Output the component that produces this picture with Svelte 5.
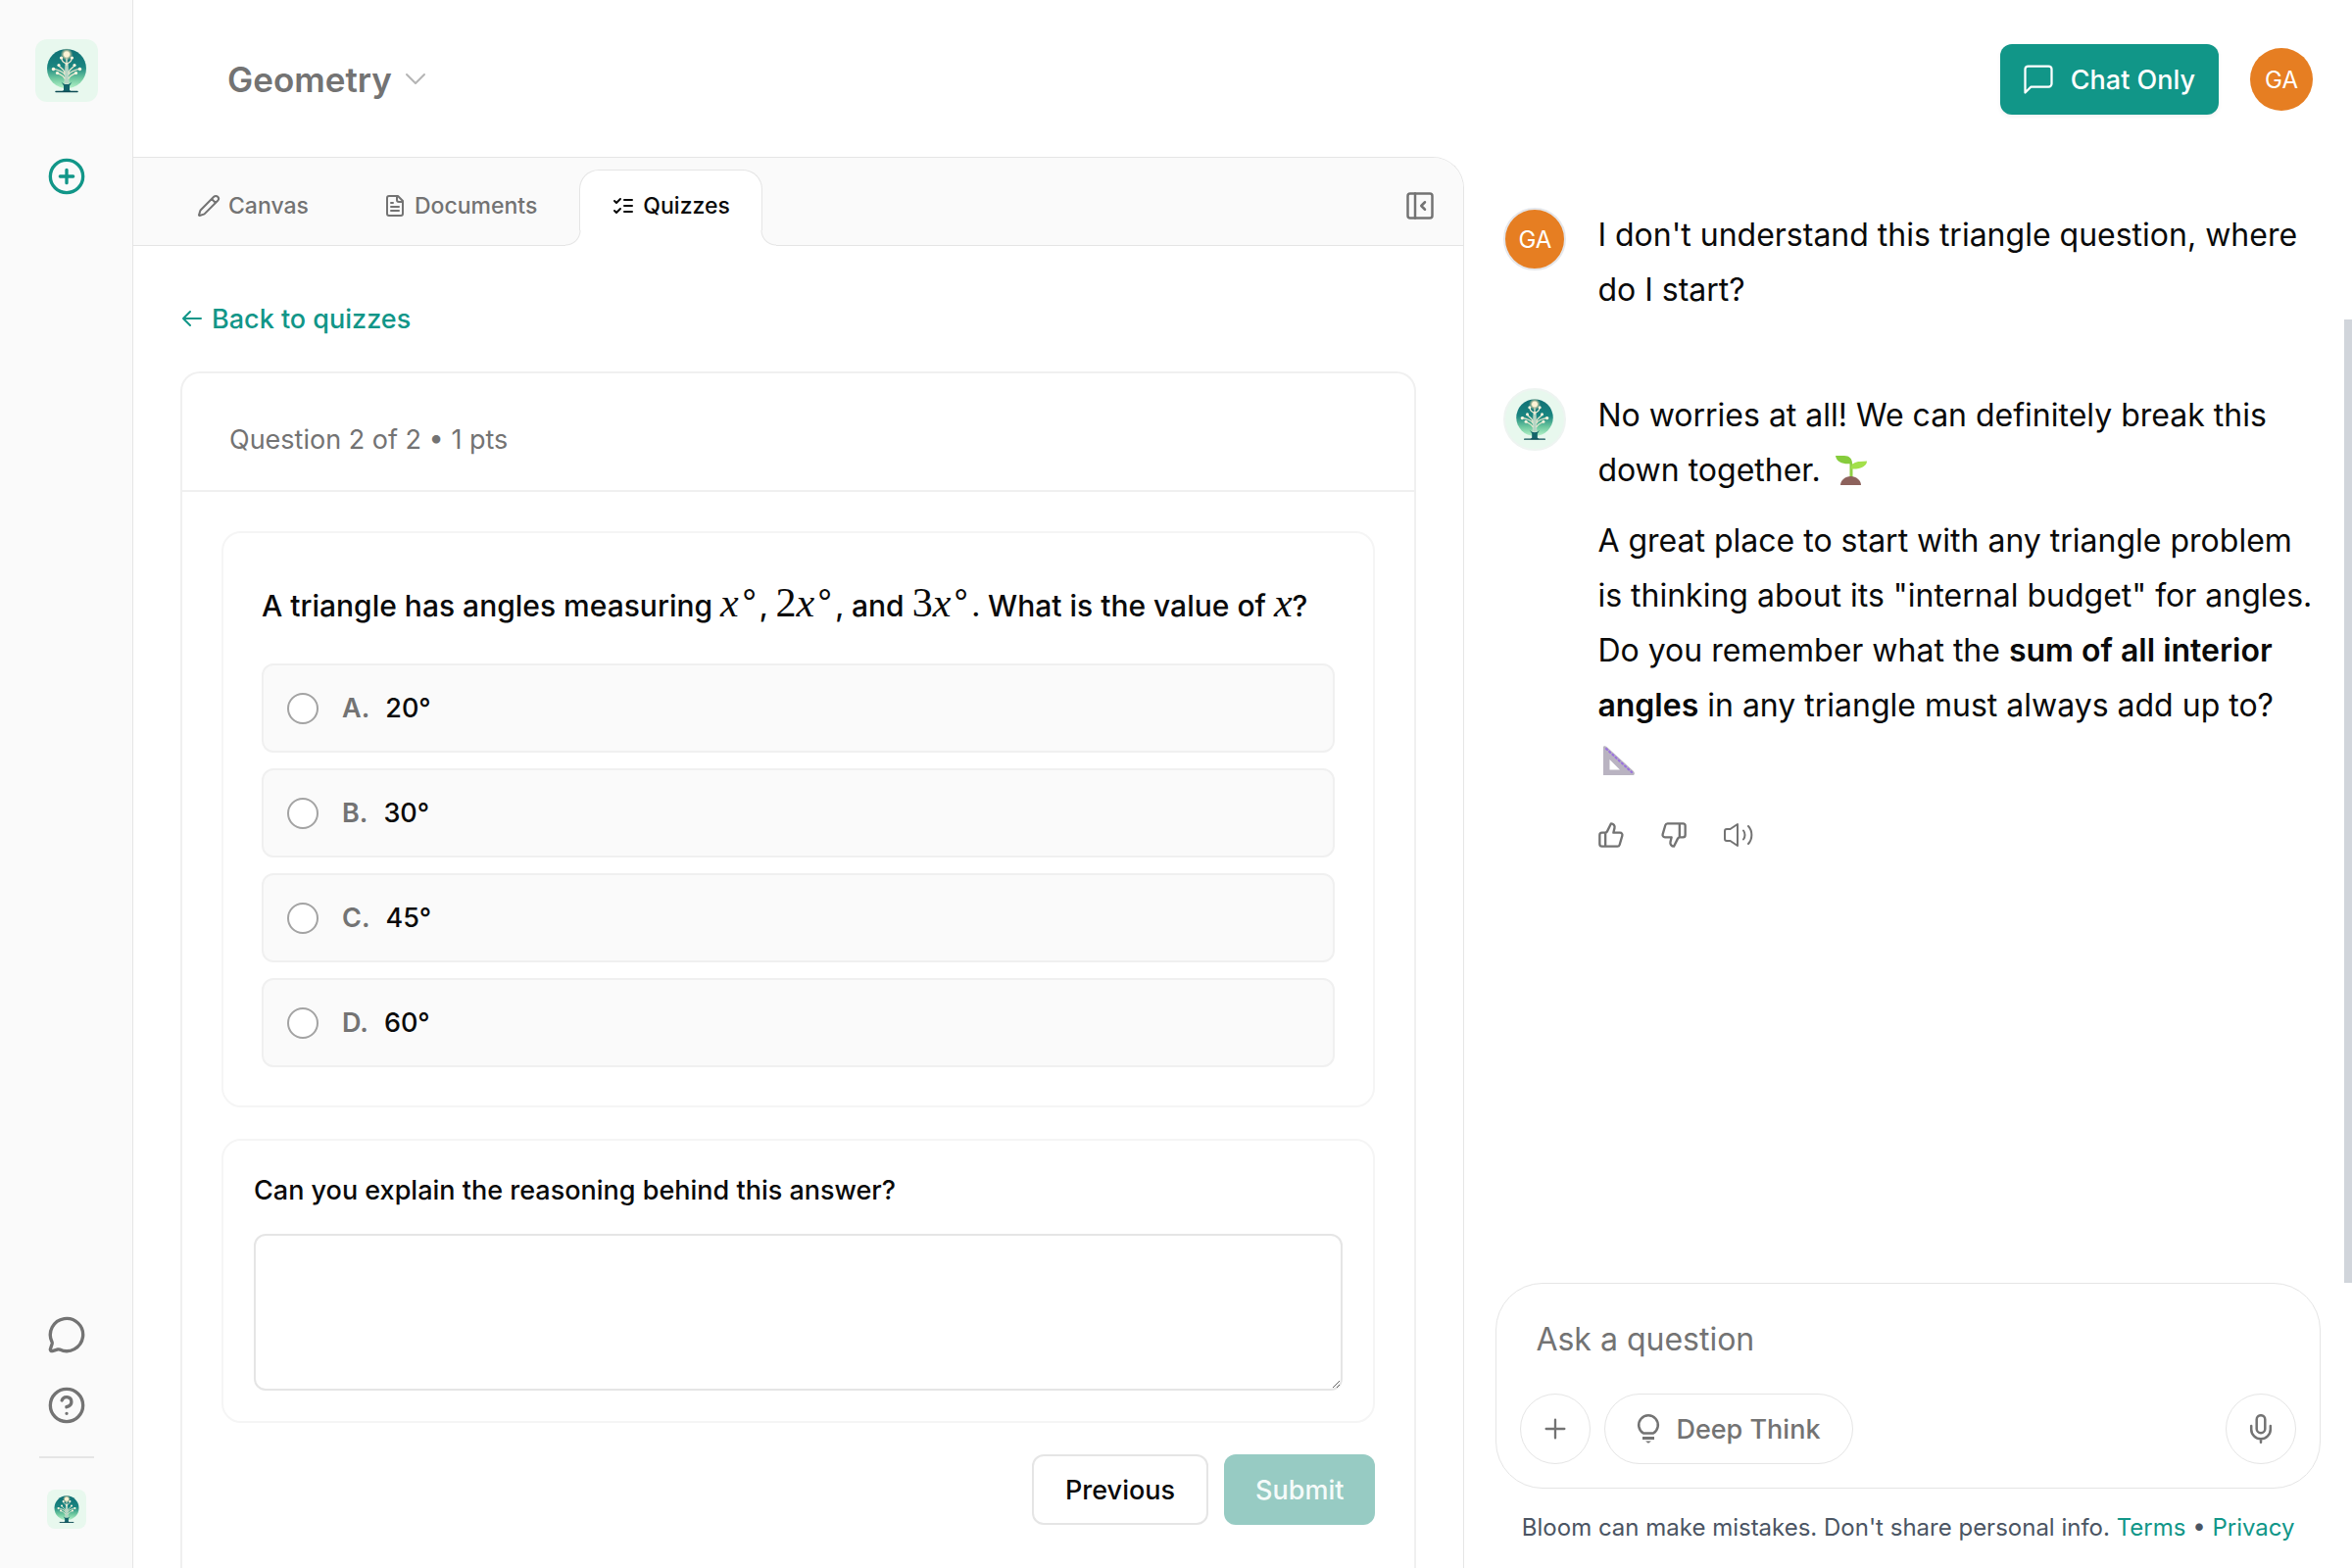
<script>
  let choice = $state("");
  let explanation = $state("");
  let message = $state("");

  const options = [
    { letter: "A", label: "20°" },
    { letter: "B", label: "30°" },
    { letter: "C", label: "45°" },
    { letter: "D", label: "60°" },
  ];
</script>

{#snippet logo()}
  <svg viewBox="0 0 64 64" aria-hidden="true">
    <defs>
      <linearGradient id="globe" x1="0" y1="0" x2="0" y2="1">
        <stop offset="0" stop-color="#0f6f74" />
        <stop offset="0.45" stop-color="#1a8580" />
        <stop offset="0.75" stop-color="#6cc79e" />
        <stop offset="1" stop-color="#b4f2c8" />
      </linearGradient>
      <radialGradient id="glow">
        <stop offset="0.4" stop-color="#fff3d6" />
        <stop offset="0.6" stop-color="#d8cfa4" stop-opacity="0.7" />
        <stop offset="1" stop-color="#8fae8c" stop-opacity="0" />
      </radialGradient>
    </defs>
    <circle cx="32" cy="30" r="20" fill="url(#globe)" />
    <circle cx="32" cy="15.5" r="6.5" fill="url(#glow)" />
    <path d="M29.500 46l1-22h3l1 22z" fill="#d5e8d6" />
    <path d="M31 45V27M33 45V27" stroke="#6fa99c" stroke-width="0.6" />
    <g fill="none" stroke="#efe9d2" stroke-width="1.3" stroke-linecap="round">
      <path d="M32 26v-6M32 25c-3-1-5-2-5-5M32 25c3-1 5-2 5-5M27 20v-1M37 20v-1" />
      <path d="M30 34c-1-4-5-5-6-7M34 34c1-4 5-5 6-7M30 36c-2-4-7-4-11-6M34 36c2-4 7-4 11-6M30 40c-2-4-6-4-8-6M34 40c2-4 6-4 8-6" />
    </g>
    <g fill="#fff6e0">
      <circle cx="26.5" cy="19" r="1.6" /><circle cx="37.5" cy="19" r="1.6" />
      <circle cx="24" cy="26.5" r="1.6" /><circle cx="40" cy="26.5" r="1.6" />
      <circle cx="18.5" cy="30.5" r="1.7" /><circle cx="45.5" cy="30.5" r="1.7" />
      <circle cx="22.5" cy="34.5" r="1.6" /><circle cx="41.5" cy="34.5" r="1.6" />
    </g>
    <path d="M26.500 43.500c2 2 3 2.500 5.500 2.500s3.500-.5 5.500-2.500l-2.500 4v4.500l2 1.500h-10l2-1.500v-4.500z" fill="#13646a" />
    <path d="M21 53.500h22" stroke="#0d4c55" stroke-width="1.5" stroke-linecap="round" />
  </svg>
{/snippet}

<div class="app">
  <nav class="rail" aria-label="Main">
    <a class="brand" href="#home" aria-label="Home">{@render logo()}</a>
    <button class="rail-btn accent" aria-label="New chat">
      <svg class="icon-lg" viewBox="0 0 24 24"><circle cx="12" cy="12" r="10" /><path d="M8 12h8M12 8v8" /></svg>
    </button>
    <div class="rail-foot">
      <button class="rail-btn" aria-label="Feedback">
        <svg class="icon-lg" viewBox="0 0 24 24"><path d="M2.992 16.342a2 2 0 0 1 .094 1.167l-1.065 3.290a1 1 0 0 0 1.236 1.168l3.413-.998a2 2 0 0 1 1.099.092 10 10 0 1 0-4.777-4.719" /></svg>
      </button>
      <button class="rail-btn" aria-label="Help">
        <svg class="icon-lg" viewBox="0 0 24 24"><circle cx="12" cy="12" r="10" /><path d="M9.090 9a3 3 0 0 1 5.830 1c0 2-3 3-3 3M12 17h.01" /></svg>
      </button>
      <hr />
      <a class="brand small" href="#profile" aria-label="Profile">{@render logo()}</a>
    </div>
  </nav>

  <div class="page">
    <header class="topbar">
      <button class="subject">
        Geometry
        <svg class="chevron" viewBox="0 0 24 24"><path d="m3 7 9 9 9-9" /></svg>
      </button>
      <div class="top-actions">
        <button class="btn primary chat-only">
          <svg viewBox="2 2 20 20"><path d="M21 15a2 2 0 0 1-2 2H7l-4 4V5a2 2 0 0 1 2-2h14a2 2 0 0 1 2 2z" /></svg>
          Chat Only
        </button>
        <button class="avatar" aria-label="Account">GA</button>
      </div>
    </header>

    <div class="columns">
      <section class="workspace">
        <div class="tabs">
          <div class="tab-list" role="tablist">
            <button class="tab" role="tab" aria-selected="false">
              <svg class="icon-sm" viewBox="0 0 24 24"><path d="M21.174 6.812a1 1 0 0 0-3.986-3.987L3.842 16.174a2 2 0 0 0-.5.830l-1.321 4.352a.5.5 0 0 0 .623.622l4.353-1.320a2 2 0 0 0 .830-.497zM15 5l4 4" /></svg>
              Canvas
            </button>
            <button class="tab docs" role="tab" aria-selected="false">
              <svg class="icon-sm" viewBox="0 0 24 24"><path d="M15 2H6a2 2 0 0 0-2 2v16a2 2 0 0 0 2 2h12a2 2 0 0 0 2-2V7ZM14 2v4a2 2 0 0 0 2 2h4M10 9H8M16 13H8M16 17H8" /></svg>
              Documents
            </button>
            <button class="tab active" role="tab" aria-selected="true">
              <svg class="icon-sm" viewBox="0 0 24 24"><path d="m3 17 2 2 4-4M3 7l2 2 4-4M13 6h8M13 12h8M13 18h8" /></svg>
              Quizzes
            </button>
          </div>
          <button class="collapse" aria-label="Collapse panel">
            <svg viewBox="0 0 24 24"><rect x="2" y="2" width="20" height="20" rx="2" /><path d="M8 2v20M16 9l-3 3 3 3" /></svg>
          </button>
        </div>

        <div class="quiz-area">
          <a class="back" href="#quizzes">
            <svg class="icon-sm" viewBox="0 0 24 24"><path d="m10 19-7-7 7-7M21 12H3" /></svg>
            Back to quizzes
          </a>

          <div class="quiz">
            <div class="quiz-head">Question 2 of 2 • 1 pts</div>
            <div class="quiz-body">
              <fieldset class="card question">
                <legend>
                  A triangle has angles measuring <span class="math"><i>x</i><sup>∘</sup></span>, <span class="math">2<i>x</i><sup>∘</sup></span>, and <span class="math">3<i>x</i><sup>∘</sup></span>. What is the value of <span class="math"><i>x</i></span>?
                </legend>
                <div class="options">
                  {#each options as option}
                    <label class="option">
                      <input type="radio" name="answer" value={option.letter} bind:group={choice} />
                      <span class="letter">{option.letter}.</span>
                      <span>{option.label}</span>
                    </label>
                  {/each}
                </div>
              </fieldset>

              <div class="card reasoning">
                <label for="reasoning">Can you explain the reasoning behind this answer?</label>
                <textarea id="reasoning" bind:value={explanation}></textarea>
              </div>

              <div class="quiz-actions">
                <button class="btn outline">Previous</button>
                <button class="btn primary" disabled>Submit</button>
              </div>
            </div>
          </div>
        </div>
      </section>

      <section class="chat" aria-label="Chat">
        <div class="messages">
          <div class="message">
            <span class="avatar msg-avatar">GA</span>
            <div class="text">
              <p>I don't understand this triangle question, where do I start?</p>
            </div>
          </div>
          <div class="message">
            <span class="bot-avatar">{@render logo()}</span>
            <div class="text">
              <p>
                No worries at all! We can definitely break this down together.
                <svg class="emoji" viewBox="0 0 32 30" role="img" aria-label="seedling">
                  <path d="M14.500 8h3v14h-3z" fill="#8fd044" />
                  <path d="M0 0h9c5 0 8 3 8 8-9 1-16-1-17-8z" fill="#86cc3c" />
                  <path d="M16 13c0-5 4-7 9-7l7-.5c0 5-6 8.500-16 8z" fill="#a3e04a" />
                  <path d="M5 30c0-5 5-9 10.500-9S26 25 26 30z" fill="#8d625c" />
                </svg>
              </p>
              <p>
                A great place to start with any triangle problem is thinking about its "internal budget" for angles. Do you remember what the <strong>sum of all interior angles</strong> in any triangle must always add up to?
                <svg class="emoji" viewBox="0 0 32 30" role="img" aria-label="triangular ruler">
                  <path d="M0 1.500C0 0 2 0 3.500 1L31 26c1.500 2 1 4-1 4H0zM6.500 14v10.500h10.500z" fill="#b9b3c1" fill-rule="evenodd" />
                  <path d="m3 3 26 24" stroke="#9a6fe0" stroke-width="2" stroke-dasharray="1.5 2.8" />
                </svg>
              </p>
              <div class="reactions">
                <button aria-label="Good response">
                  <svg class="icon-md" viewBox="0 0 24 24"><path d="M7 10v12M15 5.880 14 10h5.830a2 2 0 0 1 1.920 2.560l-2.330 8A2 2 0 0 1 17.500 22H4a2 2 0 0 1-2-2v-8a2 2 0 0 1 2-2h2.760a2 2 0 0 0 1.790-1.110L12 2a3.130 3.130 0 0 1 3 3.880Z" /></svg>
                </button>
                <button aria-label="Bad response">
                  <svg class="icon-md" viewBox="0 0 24 24"><path d="M17 14V2M9 18.120 10 14H4.170a2 2 0 0 1-1.920-2.560l2.330-8A2 2 0 0 1 6.500 2H20a2 2 0 0 1 2 2v8a2 2 0 0 1-2 2h-2.760a2 2 0 0 0-1.790 1.110L12 22a3.130 3.130 0 0 1-3-3.880Z" /></svg>
                </button>
                <button aria-label="Read aloud">
                  <svg class="icon-speak" viewBox="0 0 32 32"><path d="M15 5v22l-7.500-5H4a2 2 0 0 1-2-2v-8a2 2 0 0 1 2-2h3.500zM21 11.500c2 2.500 2 6.500 0 9M26 7c4.500 5 4.500 13 0 18" /></svg>
                </button>
              </div>
            </div>
          </div>
          <div class="scroll-thumb"></div>
        </div>

        <div class="composer-wrap">
          <form class="composer">
            <input type="text" placeholder="Ask a question" aria-label="Ask a question" bind:value={message} />
            <div class="composer-row">
              <button type="button" class="pill round" aria-label="Add attachment">
                <svg class="icon-md" viewBox="0 0 24 24"><path d="M4 12h16M12 4v16" /></svg>
              </button>
              <button type="button" class="pill">
                <svg class="bulb" viewBox="0 0 24 30"><path d="M7 19.500a9.800 9.800 0 1 1 10 0z" /><path d="M6 23h12v3H6zM9 27.500h6l-3 2.300z" class="solid" /></svg>
                Deep Think
              </button>
              <button type="button" class="pill round mic" aria-label="Voice input">
                <svg class="icon-mic" viewBox="0 0 24 30"><rect x="7.7" y="1.2" width="8.6" height="18" rx="4.3" /><path d="M2.200 12v3.500a9.800 9.800 0 0 0 19.600 0V12M12 25.500v3.300" /></svg>
              </button>
            </div>
          </form>
          <p class="note">
            Bloom can make mistakes. Don't share personal info. <a href="#terms">Terms</a> <span>•</span> <a href="#privacy">Privacy</a>
          </p>
        </div>
      </section>
    </div>
  </div>
</div>

<style>
  :global(body) {
    background: #fff;
    color: #0a0a0a;
    font-family: Inter, "Liberation Sans", sans-serif;
  }

  .app {
    --teal: #119688;
    --muted: #737373;
    --border: #e5e5e5;
    --border-soft: #f0f0f0;
    display: flex;
    height: 100vh;
    overflow: hidden;
  }

  .app :is(div, nav, section, header, button, input, textarea, fieldset, a, label, span) {
    box-sizing: border-box;
  }

  button,
  input,
  textarea {
    font: inherit;
    color: inherit;
  }

  button {
    display: flex;
    align-items: center;
    justify-content: center;
    padding: 0;
    border: none;
    background: none;
    white-space: nowrap;
    cursor: pointer;
  }

  a {
    color: var(--teal);
    text-decoration: none;
  }

  p {
    margin: 0;
  }

  svg {
    flex-shrink: 0;
    fill: none;
    stroke: currentColor;
    stroke-width: 2;
    stroke-linecap: round;
    stroke-linejoin: round;
  }

  .brand svg,
  .bot-avatar svg,
  .emoji {
    stroke: none;
  }

  .icon-sm {
    width: 24px;
    height: 24px;
  }

  .icon-md {
    width: 28px;
    height: 28px;
  }

  .icon-lg {
    width: 40px;
    height: 40px;
  }

  /* left rail */
  .rail {
    display: flex;
    flex-direction: column;
    align-items: center;
    width: 136px;
    flex-shrink: 0;
    padding: 40px 0;
    background: #fafafa;
    border-right: 1px solid var(--border);
  }

  .brand {
    width: 64px;
    height: 64px;
    border-radius: 12px;
    background: #e8f8ee;
  }

  .brand svg {
    display: block;
    width: 100%;
    height: 100%;
  }

  .brand.small {
    width: 40px;
    height: 40px;
    border-radius: 8px;
  }

  .rail-btn {
    width: 72px;
    height: 72px;
    color: var(--muted);
  }

  .rail-btn.accent {
    margin-top: 40px;
    color: var(--teal);
  }

  .rail-foot {
    display: flex;
    flex-direction: column;
    align-items: center;
    margin-top: auto;
  }

  .rail-foot hr {
    width: 56px;
    margin: 16px 0 32px;
    border: none;
    border-top: 2px solid var(--border);
  }

  /* top bar */
  .page {
    display: flex;
    flex-direction: column;
    flex: 1;
    min-width: 0;
  }

  .topbar {
    display: flex;
    align-items: center;
    justify-content: space-between;
    height: 160px;
    flex-shrink: 0;
    padding: 2px 40px 0 96px;
  }

  .subject {
    gap: 12px;
    color: var(--muted);
    font-size: 35px;
    font-weight: 600;
  }

  .chevron {
    width: 24px;
    height: 24px;
    color: #b5b5b5;
  }

  .top-actions {
    display: flex;
    align-items: center;
    gap: 32px;
  }

  .btn {
    height: 72px;
    padding: 0 32px;
    border-radius: 12px;
    font-size: 27px;
    font-weight: 500;
  }

  .btn.primary {
    background: var(--teal);
    color: #fff;
    box-shadow: 0 2px 4px rgba(0, 0, 0, 0.06);
  }

  .btn.primary:disabled {
    background: #97cbc3;
    color: #f5fbfa;
    box-shadow: none;
  }

  .btn.outline {
    border: 2px solid var(--border);
    background: #fff;
  }

  .btn.chat-only {
    gap: 18px;
    padding: 0 24px;
  }

  .chat-only svg {
    width: 30px;
    height: 30px;
    stroke-width: 1.5;
  }

  .avatar {
    display: flex;
    align-items: center;
    justify-content: center;
    width: 64px;
    height: 64px;
    border-radius: 50%;
    background: #e67e22;
    color: #fff;
    font-size: 24px;
    font-weight: 400;
  }

  /* workspace */
  .columns {
    display: grid;
    grid-template-columns: 60% 40%;
    flex: 1;
    min-height: 0;
  }

  .workspace {
    display: flex;
    flex-direction: column;
    min-height: 0;
    overflow: hidden;
    border: 1px solid var(--border);
    border-width: 1px 1px 0 0;
    border-top-right-radius: 32px;
  }

  .tabs {
    display: flex;
    align-items: flex-end;
    justify-content: space-between;
    height: 90px;
    flex-shrink: 0;
    padding: 0 24px 0 32px;
    background: #fafafa;
    border-bottom: 1px solid var(--border);
  }

  .tab-list {
    display: flex;
    margin-bottom: -1px;
  }

  .tab {
    position: relative;
    gap: 8px;
    height: 78px;
    padding: 0 32px 6px;
    border: 1px solid transparent;
    border-bottom: none;
    color: var(--muted);
    font-size: 23px;
    font-weight: 500;
  }

  .tab.docs {
    padding: 0 42px 6px;
  }

  .tab.active {
    border-color: var(--border);
    border-radius: 20px 20px 0 0;
    background: #fff;
    color: #0a0a0a;
  }

  /* flared feet of the active tab */
  .tab.active::before,
  .tab.active::after {
    content: "";
    position: absolute;
    bottom: 0;
    width: 16px;
    height: 16px;
    background: radial-gradient(circle at 0 0, #fafafa 14px, var(--border) 15px, #fff 16px);
  }

  .tab.active::before {
    right: 100%;
    margin-right: -1px;
  }

  .tab.active::after {
    left: 100%;
    margin-left: -1px;
    background: radial-gradient(circle at 100% 0, #fafafa 14px, var(--border) 15px, #fff 16px);
  }

  .collapse {
    width: 40px;
    height: 80px;
    color: var(--muted);
  }

  .collapse svg {
    width: 30px;
    height: 30px;
  }

  .quiz-area {
    display: flex;
    flex-direction: column;
    flex: 1;
    min-height: 0;
    padding: 56px 48px 0;
  }

  .back {
    display: flex;
    align-items: center;
    gap: 8px;
    height: 36px;
    flex-shrink: 0;
    font-size: 27px;
    font-weight: 500;
  }

  .quiz {
    flex: 1;
    margin-top: 36px;
    border: 2px solid var(--border-soft);
    border-bottom: none;
    border-radius: 20px 20px 0 0;
  }

  .quiz-head {
    height: 121px;
    padding: 50px 48px 0;
    border-bottom: 2px solid var(--border-soft);
    color: var(--muted);
    font-size: 27px;
    line-height: 36px;
  }

  .quiz-body {
    display: flex;
    flex-direction: column;
    gap: 32px;
    padding: 40px;
  }

  .card {
    margin: 0;
    border: 2px solid #f5f5f5;
    border-radius: 20px;
    min-width: 0;
  }

  .question {
    padding: 39px;
  }

  .question legend {
    float: left;
    width: 100%;
    margin-bottom: 24px;
    padding: 0;
    font-size: 30px;
    font-weight: 500;
    line-height: 70px;
  }

  .math {
    font-family: "Liberation Serif", serif;
    font-size: 42px;
    font-weight: 400;
    line-height: 1;
  }

  .math sup {
    font-size: 34px;
    line-height: 0;
    vertical-align: 12px;
  }

  .options {
    display: flex;
    flex-direction: column;
    gap: 16px;
    clear: both;
  }

  .option {
    display: flex;
    align-items: center;
    gap: 16px;
    height: 91px;
    padding: 0 24px;
    border: 2px solid var(--border-soft);
    border-radius: 12px;
    background: #fafafa;
    font-size: 27px;
    font-weight: 500;
  }

  .option input {
    appearance: none;
    width: 32px;
    height: 32px;
    margin: 0 8px 0 0;
    border: 2px solid #a3a3a3;
    border-radius: 50%;
    background: #fff;
  }

  .option input:checked {
    border: 10px solid var(--teal);
  }

  .letter {
    color: var(--muted);
    font-weight: 600;
  }

  .reasoning {
    padding: 31px;
  }

  .reasoning label {
    display: block;
    font-size: 27px;
    font-weight: 500;
    line-height: 40px;
  }

  .reasoning textarea {
    display: block;
    width: 100%;
    height: 160px;
    margin-top: 24px;
    padding: 16px;
    border: 2px solid var(--border);
    border-radius: 12px;
    background: #fff;
    outline: none;
  }

  .quiz-actions {
    display: flex;
    justify-content: flex-end;
    gap: 16px;
  }

  /* chat */
  .chat {
    display: flex;
    flex-direction: column;
    min-height: 0;
  }

  .messages {
    position: relative;
    display: flex;
    flex-direction: column;
    gap: 72px;
    flex: 1;
    padding: 52px 40px 0;
  }

  .message {
    display: flex;
    gap: 32px;
  }

  .msg-avatar,
  .bot-avatar {
    width: 64px;
    height: 64px;
    flex-shrink: 0;
    border-radius: 50%;
    border: 2px solid #e5e7eb;
  }

  .bot-avatar {
    border-color: #eef4f1;
    background: #e8f8ee;
  }

  .bot-avatar svg {
    display: block;
    width: 60px;
    height: 60px;
  }

  .text {
    display: flex;
    flex-direction: column;
    gap: 16px;
    font-size: 32px;
    line-height: 56px;
  }

  strong {
    font-weight: 600;
  }

  .emoji {
    width: 32px;
    height: 30px;
    margin: 0 6px;
    vertical-align: -4px;
  }

  .reactions {
    display: flex;
    gap: 36px;
    margin-top: 16px;
    color: var(--muted);
  }

  .icon-speak {
    width: 32px;
    height: 32px;
  }

  .scroll-thumb {
    position: absolute;
    top: 166px;
    right: 0;
    bottom: 0;
    width: 8px;
    background: #d1d5db;
  }

  .composer-wrap {
    padding: 0 32px 25px;
  }

  .composer {
    padding: 32px 24px 24px;
    border: 1px solid var(--border);
    border-radius: 48px;
  }

  .composer input {
    width: 100%;
    height: 48px;
    padding: 0 16px;
    border: none;
    outline: none;
    background: none;
    font-size: 32px;
  }

  .composer input::placeholder {
    color: var(--muted);
    opacity: 1;
  }

  .composer-row {
    display: flex;
    gap: 14px;
    margin-top: 32px;
  }

  .pill {
    gap: 16px;
    height: 72px;
    padding: 0 32px;
    border: 1px solid var(--border);
    border-radius: 36px;
    color: var(--muted);
    font-size: 27px;
    font-weight: 500;
  }

  .pill.round {
    width: 72px;
    padding: 0;
  }

  .pill.mic {
    margin-left: auto;
  }

  .bulb,
  .icon-mic {
    width: 24px;
    height: 30px;
    stroke-width: 2.5;
  }

  .bulb .solid {
    fill: currentColor;
    stroke: none;
  }

  .note {
    margin-top: 24px;
    color: #4b5563;
    font-size: 24px;
    line-height: 32px;
    text-align: center;
  }
</style>
